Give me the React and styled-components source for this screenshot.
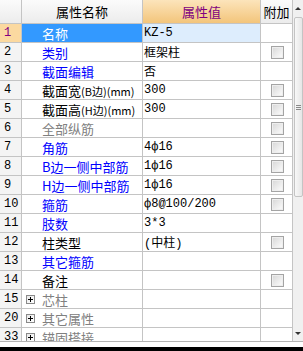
import React from "react";
import styled, { createGlobalStyle, css } from "styled-components";

const Global = createGlobalStyle`
  html, body { margin: 0; padding: 0; background: #000; }
  #root { width: 303px; }
`;

const Frame = styled.div`
  width: 303px;
  height: 347px;
  background: #fff;
  display: flex;
  flex-direction: column;
  overflow: hidden;
`;

const Body = styled.div`
  height: 342px;
  display: flex;
  flex-direction: row;
  border-bottom: 1px solid #b4b4b4;
  box-sizing: border-box;
`;

const Grid = styled.div`
  width: 293px;
  display: grid;
  grid-template-columns: 22px 121px 118px 32px;
  grid-auto-rows: 19px;
  grid-template-rows: 24px;
  align-content: start;
  overflow: hidden;
`;

const Cell = styled.div`
  box-sizing: border-box;
  border-right: 1px solid #c4c4c4;
  border-bottom: 1px solid #c4c4c4;
  display: flex;
  align-items: center;
  white-space: nowrap;
  overflow: hidden;
  font-family: "Noto Sans CJK SC", sans-serif;
  font-size: 13px;
  color: #000;
`;

const HeadCell = styled(Cell)`
  justify-content: center;
  font-size: 13px;
  background: ${(p) =>
    p.$accent
      ? "linear-gradient(#fce4bb, #f3c57b)"
      : "linear-gradient(#fbfbfb, #ececec)"};
  color: ${(p) => (p.$accent ? "#800080" : "#000")};
`;

const NumCell = styled(Cell)`
  font-family: "Liberation Mono", monospace;
  font-size: 12px;
  padding-left: 4px;
  background: ${(p) => (p.$sel ? "#fbd9a0" : "#f4f4f4")};
  color: ${(p) => (p.$sel ? "#800080" : "#000")};
`;

const tones = {
  blue: "#0000ff",
  black: "#000000",
  gray: "#808080",
};

const NameCell = styled(Cell)`
  padding-left: ${(p) => (p.$group ? "4px" : "20px")};
  gap: 7px;
  color: ${(p) => (p.$sel ? "#fff" : tones[p.$tone])};
  background: ${(p) => (p.$sel ? "#3399ff" : "#fff")};
`;

const Unit = styled.span`
  font-size: 11px;
  font-family: "Noto Sans CJK SC", sans-serif;
`;

const ValueCell = styled(Cell)`
  padding-left: 1px;
  font-family: "Liberation Mono", "Noto Sans CJK SC", monospace;
  font-size: 12px;
  background: ${(p) => (p.$sel ? "#ddedfd" : "#fff")};
`;

const AddCell = styled(Cell)`
  justify-content: center;
`;

const Check = styled.span`
  width: 11px;
  height: 11px;
  border: 1px solid #a4a4a4;
  background: linear-gradient(135deg, #d6d6d6, #f6f6f6 80%);
  box-shadow: inset 0 0 0 1px #eeeeee;
  margin-left: 2px;
`;

const Expander = styled.span`
  width: 9px;
  height: 9px;
  box-sizing: border-box;
  border: 1px solid #8a8a8a;
  background: linear-gradient(135deg, #e8e8e8, #ffffff);
  position: relative;
  flex: none;
  &::before {
    content: "";
    position: absolute;
    left: 1px;
    top: 3px;
    width: 5px;
    height: 1px;
    background: #000;
  }
  &::after {
    content: "";
    position: absolute;
    left: 3px;
    top: 1px;
    width: 1px;
    height: 5px;
    background: #000;
  }
`;

const ScrollBar = styled.div`
  width: 10px;
  background: #f0f0f0;
  display: flex;
  flex-direction: column;
  align-items: center;
`;

const Arrow = styled.div`
  height: 16px;
  width: 100%;
  display: flex;
  align-items: center;
  justify-content: center;
  ${(p) =>
    p.$down &&
    css`
      margin-top: auto;
    `}
`;

const Tri = styled.span`
  width: 0;
  height: 0;
  border-left: 3px solid transparent;
  border-right: 3px solid transparent;
  ${(p) =>
    p.$down
      ? css`border-top: 3px solid #333;`
      : css`border-bottom: 3px solid #333;`}
`;

const Thumb = styled.div`
  margin-top: 1px;
  width: 9px;
  margin-left: 1px;
  height: 180px;
  box-sizing: border-box;
  border: 1px solid #c4c4c4;
  border-radius: 2px;
  background: linear-gradient(90deg, #f8f8f8, #e6e6e6);
  display: flex;
  align-items: center;
  justify-content: center;
`;

const Grip = styled.div`
  width: 5px;
  height: 5px;
  background: repeating-linear-gradient(
    #8a8a8a 0,
    #8a8a8a 1px,
    transparent 1px,
    transparent 2px
  );
`;

const rows = [
  { n: 1, name: "名称", tone: "blue", value: "KZ-5", sel: true, check: false },
  { n: 2, name: "类别", tone: "blue", value: "框架柱", check: true },
  { n: 3, name: "截面编辑", tone: "blue", value: "否", check: false },
  { n: 4, name: "截面宽", unit: "(B边)(mm)", tone: "black", value: "300", check: true },
  { n: 5, name: "截面高", unit: "(H边)(mm)", tone: "black", value: "300", check: true },
  { n: 6, name: "全部纵筋", tone: "gray", value: "", check: true },
  { n: 7, name: "角筋", tone: "blue", value: "4ф16", check: true },
  { n: 8, name: "B边一侧中部筋", tone: "blue", value: "1ф16", check: true },
  { n: 9, name: "H边一侧中部筋", tone: "blue", value: "1ф16", check: true },
  { n: 10, name: "箍筋", tone: "blue", value: "ф8@100/200", check: true },
  { n: 11, name: "肢数", tone: "blue", value: "3*3", check: false },
  { n: 12, name: "柱类型", tone: "black", value: "(中柱)", check: true },
  { n: 13, name: "其它箍筋", tone: "blue", value: "", check: false },
  { n: 14, name: "备注", tone: "black", value: "", check: true },
  { n: 15, name: "芯柱", tone: "gray", group: true },
  { n: 20, name: "其它属性", tone: "gray", group: true },
  { n: 33, name: "锚固搭接", tone: "gray", group: true },
];

export default function App() {
  return (
    <>
      <Global />
      <Frame>
        <Body>
          <Grid>
            <HeadCell />
            <HeadCell>属性名称</HeadCell>
            <HeadCell $accent>属性值</HeadCell>
            <HeadCell>附加</HeadCell>
            {rows.map((r) => (
              <React.Fragment key={r.n}>
                <NumCell $sel={r.sel}>{r.n}</NumCell>
                <NameCell $tone={r.tone} $sel={r.sel} $group={r.group}>
                  {r.group && <Expander />}
                  <span>
                    {r.name}
                    {r.unit && <Unit>{r.unit}</Unit>}
                  </span>
                </NameCell>
                <ValueCell $sel={r.sel}>{r.value}</ValueCell>
                <AddCell>{r.check && <Check />}</AddCell>
              </React.Fragment>
            ))}
          </Grid>
          <ScrollBar>
            <Arrow>
              <Tri />
            </Arrow>
            <Thumb>
              <Grip />
            </Thumb>
            <Arrow $down>
              <Tri $down />
            </Arrow>
          </ScrollBar>
        </Body>
      </Frame>
    </>
  );
}
